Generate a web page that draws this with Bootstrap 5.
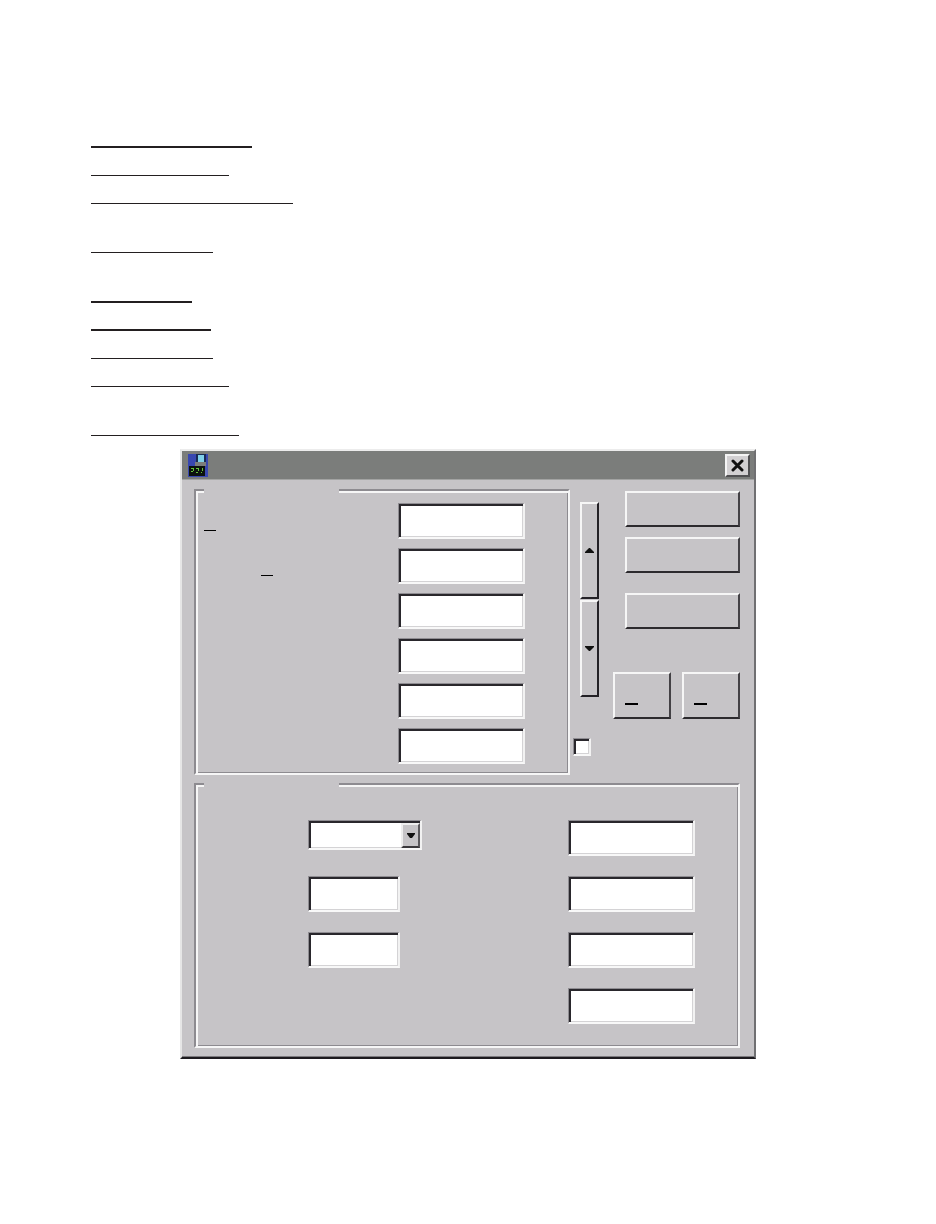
<!DOCTYPE html>
<html lang="en">
<head>
<meta charset="utf-8">
<meta name="viewport" content="width=device-width, initial-scale=1">
<title>Settings dialog</title>
<link href="https://cdn.jsdelivr.net/npm/bootstrap@5.3.0/dist/css/bootstrap.min.css" rel="stylesheet">
<style>
:root { --face:#c6c4c7; --shade:#8d8b90; --dark:#232126; --lite:#f6f6f6; }
body { background:#fff; font-family:"Liberation Sans",sans-serif; }

/* blank entries to fill in, above the dialog */
.entries { padding:120px 91px 0; }
.entries li { height:28px; border-bottom:1px solid #231f20; }
.entries .heavy { border-bottom-width:2px; }
.entries .spaced { margin-top:21px; }
.entries .topic { margin-top:22px; }
.w-a { width:161px; } .w-b { width:138px; } .w-c { width:202px; }
.w-d { width:122px; } .w-e { width:101px; } .w-f { width:120px; } .w-g { width:148px; }

.window { max-width:576px; margin-top:13px; background:var(--face);
  border:solid; border-width:2px 2px 2px 2px;
  border-color:#ececec #707072 #1c1a1e #e6e6e6; box-shadow:inset 0 -1px #7c7a7e; }
.titlebar { height:29px; padding:0 4px 0 6px; background:#7b7d7b; border-bottom:1px solid #a2a3a2; }
.client { padding:6px 14px 9px 12px; }

.raised { background:var(--face); border:2px solid; border-radius:0; padding:0;
  border-color:var(--lite) #434145 #2c2a2e var(--lite); }
.close-btn { width:25px; height:23px; background:#d2d0d2; border-color:#f4f4f4 #505052 #505052 #f4f4f4; }
.spin { width:19px; height:97px; border-right-color:var(--dark); border-bottom-color:var(--dark); }
.action { width:115px; height:36px; }
.nudge { width:58px; height:47px; padding:0 0 12px 10px; }

.group { border:2px solid; border-color:var(--shade) var(--lite) var(--lite) var(--shade);
  box-shadow:inset 2px 2px var(--lite), inset -1px -1px var(--shade); }
.group legend { float:none; width:135px; height:8px; margin:0 0 0 8px; background:var(--face); }
.main-group { flex:0 1 376px; padding-bottom:9px; }
.main-rows { padding-top:9px; gap:9px; }
.main-label { width:202px; height:36px; padding:0 0 8px 8px; }
.shifted { padding-left:65px; }
.mnemonic { width:12px; height:1px; background:#000; }
.nudge .mnemonic { width:13px; height:2px; }

.well { width:127px; height:36px; padding:2px 4px; background:#fff; border:solid; border-width:1px 2px 2px 1px; border-radius:0;
  border-color:#8f8d92 #f2f2f2 #f8f8f8 #8f8d92;
  box-shadow:inset 2px 2px #29272c, inset -1px -1px #d4d3d5; }
.well-short { width:92px; }
.combo { width:114px; height:30px; }
.combo select { width:100%; height:30px; appearance:none; }
.combo-arrow { top:3px; right:2px; width:19px; height:25px; pointer-events:none; border-color:#eee #5a585c #3a383c #eee; }
.tick { width:18px; height:18px; margin:19px 0 0 3px; appearance:none; padding:0; }

.controls { padding:5px 0 0 10px; gap:14px; }
.spinners { margin-top:11px; gap:1px; }
.actions { gap:10px; }
.action-apart { margin-top:10px; }
.nudges { margin-top:33px; gap:11px; }

.detail-group { margin-top:5px; padding-bottom:22px; }
.detail-rows { padding:32px 0 0 112px; gap:146px; }
.detail-col { gap:20px; }
.detail-left { width:114px; }
.slot { height:36px; }
</style>
</head>
<body>
<ul class="entries list-unstyled mb-0">
  <li class="heavy w-a"></li>
  <li class="w-b"></li>
  <li class="w-c"></li>
  <li class="spaced w-d"></li>
  <li class="heavy topic w-e"></li>
  <li class="heavy w-f"></li>
  <li class="w-d"></li>
  <li class="w-b"></li>
  <li class="spaced w-g"></li>
</ul>

<main class="window mx-auto">
  <header class="titlebar d-flex align-items-center justify-content-between">
    <svg width="20" height="23" viewBox="0 0 20 23" aria-hidden="true">
      <path fill="#3847b0" d="M0 0h20v23H0z"/>
      <path fill="#172a55" d="M8 0h10v9H8z"/>
      <path fill="#7fd0ea" d="M10 1h6v7h-6z"/>
      <path fill="#7b7d7b" d="M7 8h11v4H7z"/>
      <path fill="#0b110d" d="M1 12h16v10H1z"/>
      <path fill="#66c43a" d="M3 14h3v1H3zM5 15h1v2H5zM3 17h2v1H3zM8 14h3v1H8zM10 15h1v2h-1zM8 18h2v1H8zM14 14h1v3h-1zM13 18h1v1h-1z"/>
    </svg>
    <button type="button" class="raised close-btn d-flex align-items-center justify-content-center" aria-label="Close">
      <svg width="13" height="13" viewBox="0 0 13 13"><path d="M2 2L11 11M11 2L2 11" stroke="#111" stroke-width="3" stroke-linecap="round" fill="none"/></svg>
    </button>
  </header>

  <form class="client">
    <div class="d-flex">
      <fieldset class="group main-group">
        <legend></legend>
        <div class="main-rows d-flex flex-column">
          <div class="d-flex"><label for="m1" class="main-label d-flex align-items-end"><span class="mnemonic"></span></label><input id="m1" class="well" type="text" aria-label="Value 1"></div>
          <div class="d-flex"><label for="m2" class="main-label shifted d-flex align-items-end"><span class="mnemonic"></span></label><input id="m2" class="well" type="text" aria-label="Value 2"></div>
          <div class="d-flex"><label for="m3" class="main-label"></label><input id="m3" class="well" type="text" aria-label="Value 3"></div>
          <div class="d-flex"><label for="m4" class="main-label"></label><input id="m4" class="well" type="text" aria-label="Value 4"></div>
          <div class="d-flex"><label for="m5" class="main-label"></label><input id="m5" class="well" type="text" aria-label="Value 5"></div>
          <div class="d-flex"><label for="m6" class="main-label"></label><input id="m6" class="well" type="text" aria-label="Value 6"></div>
        </div>
      </fieldset>

      <div class="flex-grow-1">
        <div class="controls d-flex justify-content-between">
          <div class="spinners d-flex flex-column">
            <button type="button" class="raised spin d-flex align-items-center justify-content-center" aria-label="Increase"><svg width="9" height="5" viewBox="0 0 9 5"><path fill="#111" d="M4 0h1l4 4v1H0V4z"/></svg></button>
            <button type="button" class="raised spin d-flex align-items-center justify-content-center" aria-label="Decrease"><svg width="9" height="5" viewBox="0 0 9 5"><path fill="#111" d="M0 0h9v1L5 5H4L0 1z"/></svg></button>
          </div>
          <div class="actions d-flex flex-column align-items-end">
            <button type="button" class="raised action" aria-label="OK"></button>
            <button type="button" class="raised action" aria-label="Cancel"></button>
            <button type="button" class="raised action action-apart" aria-label="Help"></button>
            <div class="nudges d-flex">
              <button type="button" class="raised nudge d-flex align-items-end" aria-label="Previous"><span class="mnemonic"></span></button>
              <button type="button" class="raised nudge d-flex align-items-end" aria-label="Next"><span class="mnemonic"></span></button>
            </div>
          </div>
        </div>
        <input type="checkbox" class="well tick d-block" aria-label="Option">
      </div>
    </div>

    <fieldset class="group detail-group">
      <legend></legend>
      <div class="detail-rows d-flex">
        <div class="detail-col detail-left d-flex flex-column">
          <div class="slot">
            <div class="combo position-relative">
              <select class="well" aria-label="Selection"><option></option></select>
              <span class="raised combo-arrow position-absolute d-flex align-items-center justify-content-center"><svg width="8" height="5" viewBox="0 0 8 5"><path fill="#111" d="M0 0h8v1L5 5H3L0 1z"/></svg></span>
            </div>
          </div>
          <input class="well well-short" type="text" aria-label="Detail 1">
          <input class="well well-short" type="text" aria-label="Detail 2">
        </div>
        <div class="detail-col d-flex flex-column">
          <input class="well" type="text" aria-label="Detail 3">
          <input class="well" type="text" aria-label="Detail 4">
          <input class="well" type="text" aria-label="Detail 5">
          <input class="well" type="text" aria-label="Detail 6">
        </div>
      </div>
    </fieldset>
  </form>
</main>
<script src="https://cdn.jsdelivr.net/npm/bootstrap@5.3.0/dist/js/bootstrap.bundle.min.js"></script>
</body>
</html>
